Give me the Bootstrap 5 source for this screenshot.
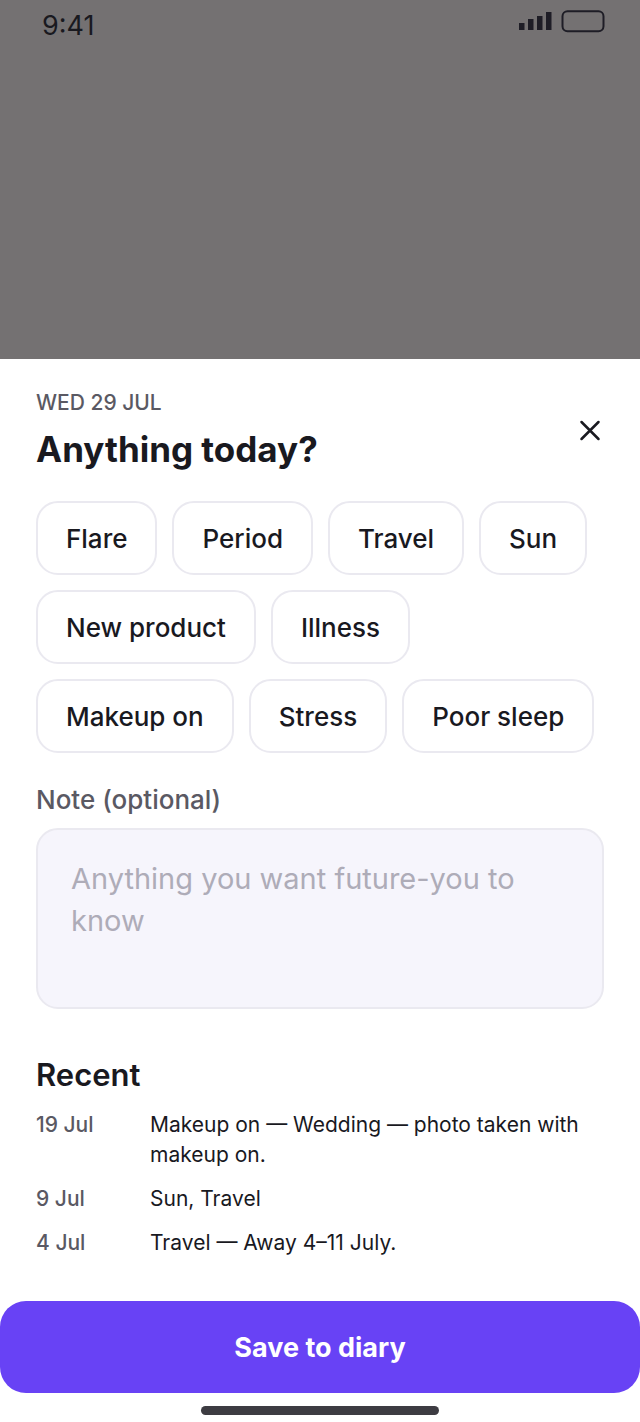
<!DOCTYPE html>
<html lang="en">
<head>
<meta charset="utf-8">
<meta name="viewport" content="width=device-width, initial-scale=1">
<title>Skin diary</title>
<link rel="stylesheet" href="https://cdn.jsdelivr.net/npm/bootstrap@5.3.0/dist/css/bootstrap.min.css">
<style>
  :root { --ink: #19191f; --muted: #5a5963; --line: #eae9f0; --accent: #6842f5; }
  body { font-family: Inter, "Open Sans", sans-serif; color: var(--ink); background: #747172; }
  .status-bar { padding: 8px 35px 0 42px; }
  .clock { font-size: 27px; line-height: 36px; }
  .sheet { background: #fff; padding-top: 26px; }
  .sheet-body { padding: 0 36px; }
  .eyebrow { font-size: 21px; line-height: 36px; font-weight: 500; color: var(--muted); }
  .sheet-title { font-size: 35px; line-height: 56px; font-weight: 700; }
  .close-btn { width: 48px; height: 48px; margin-right: -10px; color: var(--ink); }
  .chips { gap: 15px; margin-top: 24px; }
  .chip { height: 74px; padding: 0 28px; border: 2px solid var(--line); border-radius: 22px; font-size: 26px; font-weight: 500; color: var(--ink); background: #fff; }
  .note-label { margin-top: 29px; font-size: 26px; line-height: 36px; font-weight: 500; color: var(--muted); }
  .note-box { height: 181px; margin-top: 10px; padding: 28px 33px; border: 2px solid var(--line); border-radius: 22px; background: #f6f5fc; font-size: 29px; line-height: 42px; resize: none; }
  .note-box::placeholder { color: #aeacb8; }
  .recent-title { margin-top: 46px; font-size: 31px; line-height: 40px; font-weight: 600; }
  .entries { margin-top: 15px; gap: 14px; font-size: 21px; line-height: 30px; }
  .entry-date { flex: 0 0 114px; font-weight: 500; color: var(--muted); }
  .save-btn { height: 92px; margin-top: 43px; padding: 8px 0 6px; border-radius: 26px; background: var(--accent); color: #fff; font-size: 27px; font-weight: 700; }
  .save-btn:hover { background: #5a35e0; color: #fff; }
  .home-bar { width: 238px; height: 9px; margin: 13px auto 7px; border-radius: 5px; background: #3d3c42; }
</style>
</head>
<body>
<div class="d-flex flex-column min-vh-100">
  <header class="status-bar d-flex justify-content-between align-items-start flex-grow-1">
    <span class="clock">9:41</span>
    <span class="d-flex">
      <svg width="88" height="26" viewBox="0 0 88 26" role="img" aria-label="Signal and battery">
        <g fill="#1e1d26"><rect x="2" y="15" width="5.5" height="7"/><rect x="11" y="11" width="5.5" height="11"/><rect x="20" y="8" width="5.5" height="14"/><rect x="29" y="4" width="5.5" height="18"/></g>
        <rect x="45.5" y="3.3" width="41" height="20" rx="5" fill="none" stroke="#1e1d26" stroke-width="2"/>
      </svg>
    </span>
  </header>

  <main class="sheet">
    <div class="sheet-body">
      <div class="d-flex justify-content-between align-items-center">
        <div>
          <div class="eyebrow">WED 29 JUL</div>
          <h1 class="sheet-title mb-0">Anything today?</h1>
        </div>
        <button type="button" class="close-btn btn border-0 p-0 d-flex align-items-center justify-content-center" aria-label="Close">
          <svg width="22" height="22" viewBox="0 0 22 22" fill="none" stroke="currentColor" stroke-width="2.5" stroke-linecap="round"><path d="M2.5 2l17 17M19.5 2l-17 17"/></svg>
        </button>
      </div>

      <div class="chips d-flex flex-wrap">
        <button type="button" class="chip btn">Flare</button>
        <button type="button" class="chip btn">Period</button>
        <button type="button" class="chip btn">Travel</button>
        <button type="button" class="chip btn">Sun</button>
        <button type="button" class="chip btn">New product</button>
        <button type="button" class="chip btn">Illness</button>
        <button type="button" class="chip btn">Makeup on</button>
        <button type="button" class="chip btn">Stress</button>
        <button type="button" class="chip btn">Poor sleep</button>
      </div>

      <label for="note" class="note-label d-block">Note (optional)</label>
      <textarea id="note" class="note-box form-control" placeholder="Anything you want future-you to know"></textarea>

      <h2 class="recent-title mb-0">Recent</h2>
      <div class="entries d-flex flex-column">
        <div class="d-flex"><span class="entry-date">19 Jul</span><span>Makeup on — Wedding — photo taken with makeup on.</span></div>
        <div class="d-flex"><span class="entry-date">9 Jul</span><span>Sun, Travel</span></div>
        <div class="d-flex"><span class="entry-date">4 Jul</span><span>Travel — Away 4–11 July.</span></div>
      </div>
    </div>

    <button type="button" class="save-btn btn border-0 w-100 d-block">Save to diary</button>
    <div class="home-bar"></div>
  </main>
</div>
<script src="https://cdn.jsdelivr.net/npm/bootstrap@5.3.0/dist/js/bootstrap.bundle.min.js"></script>
</body>
</html>
